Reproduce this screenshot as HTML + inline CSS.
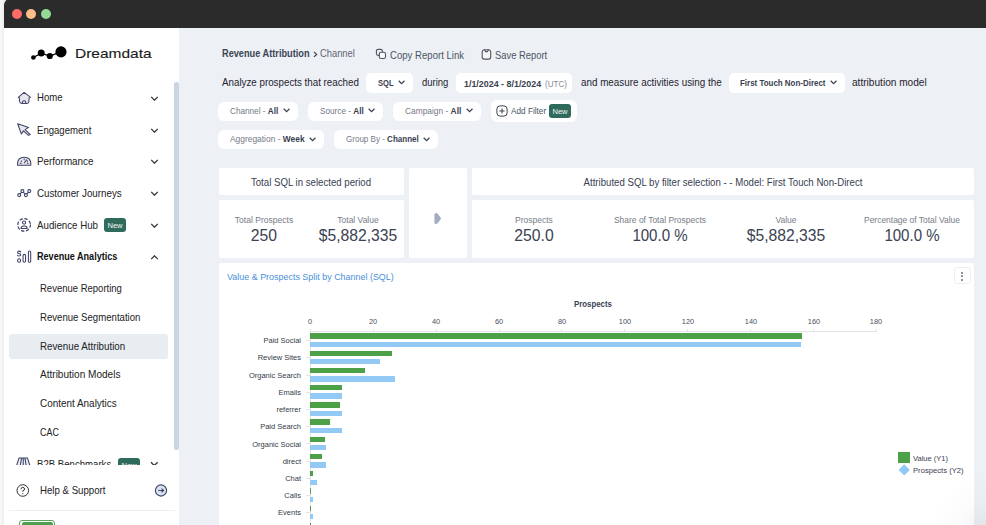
<!DOCTYPE html>
<html><head><meta charset="utf-8"><style>
html,body{margin:0;padding:0;}
body{width:986px;height:525px;overflow:hidden;position:relative;font-family:"Liberation Sans",sans-serif;background:#f3f3f3;}
.r{position:absolute;}
.t{position:absolute;white-space:nowrap;}
b{font-weight:bold;}
</style></head><body>
<div class="r" style="left:0px;top:0px;width:986px;height:525px;background:linear-gradient(to right,#f8f8f8 0,#f1f1f1 3px,#ededed 4px);"></div>
<div class="r" style="left:4px;top:-1px;width:990px;height:530px;background:#ffffff;border-radius:6px 0 0 0;overflow:hidden;"></div>
<div class="r" style="left:179.2px;top:20px;width:820px;height:510px;background:#edf0f5;"></div>
<div class="r" style="left:4px;top:-1px;width:990px;height:28.5px;background:#2b2b2b;border-radius:6px 0 0 0;"></div>
<div class="r" style="left:11.500000000000002px;top:8.6px;width:10.2px;height:10.2px;background:#fe6b68;border-radius:50%;"></div>
<div class="r" style="left:26.1px;top:8.6px;width:10.2px;height:10.2px;background:#fdbd88;border-radius:50%;"></div>
<div class="r" style="left:40.8px;top:8.6px;width:10.2px;height:10.2px;background:#95d895;border-radius:50%;"></div>
<div class="r" style="left:174px;top:82px;width:5px;height:368px;background:#c9d6e2;border-radius:2.5px;"></div>
<svg class="r" style="left:25px;top:40px" width="50" height="25" viewBox="25 40 50 25">
<path d="M33.4 57.5 L41.2 53.1 L49.8 56 L61 51.9" stroke="#000" stroke-width="1.3" fill="none"/>
<circle cx="33.4" cy="57.5" r="2.3"/><circle cx="41.2" cy="53.1" r="3.5"/><circle cx="49.8" cy="56" r="3.1"/><circle cx="61" cy="51.9" r="5.6"/>
</svg>
<div class="t" style="left:74.80px;top:46.80px;font-size:13.4px;line-height:13.4px;color:#1a1a1a;transform:scaleX(1.1570);transform-origin:0 0;-webkit-text-stroke:0.1px #1a1a1a;">Dreamdata</div>
<div class="t" style="left:37.40px;top:93.40px;font-size:10.2px;line-height:10.2px;color:#222222;transform:scaleX(0.9409);transform-origin:0 0;">Home</div>
<svg class="r" style="left:151px;top:96.2px" width="7" height="5" viewBox="-0.2 -0.6 7 4.5"><path d="M0 0 L3.3 3.3 L6.6 0" stroke="#333" stroke-width="1.3" fill="none"/></svg>
<div class="t" style="left:37.40px;top:125.50px;font-size:10.2px;line-height:10.2px;color:#222222;transform:scaleX(0.9404);transform-origin:0 0;">Engagement</div>
<svg class="r" style="left:151px;top:128.3px" width="7" height="5" viewBox="-0.2 -0.6 7 4.5"><path d="M0 0 L3.3 3.3 L6.6 0" stroke="#333" stroke-width="1.3" fill="none"/></svg>
<div class="t" style="left:37.40px;top:156.60px;font-size:10.2px;line-height:10.2px;color:#222222;transform:scaleX(0.9693);transform-origin:0 0;">Performance</div>
<svg class="r" style="left:151px;top:159.4px" width="7" height="5" viewBox="-0.2 -0.6 7 4.5"><path d="M0 0 L3.3 3.3 L6.6 0" stroke="#333" stroke-width="1.3" fill="none"/></svg>
<div class="t" style="left:37.40px;top:188.50px;font-size:10.2px;line-height:10.2px;color:#222222;transform:scaleX(0.9589);transform-origin:0 0;">Customer Journeys</div>
<svg class="r" style="left:151px;top:191.3px" width="7" height="5" viewBox="-0.2 -0.6 7 4.5"><path d="M0 0 L3.3 3.3 L6.6 0" stroke="#333" stroke-width="1.3" fill="none"/></svg>
<div class="t" style="left:37.40px;top:220.50px;font-size:10.2px;line-height:10.2px;color:#222222;transform:scaleX(0.9535);transform-origin:0 0;">Audience Hub</div>
<svg class="r" style="left:151px;top:223.3px" width="7" height="5" viewBox="-0.2 -0.6 7 4.5"><path d="M0 0 L3.3 3.3 L6.6 0" stroke="#333" stroke-width="1.3" fill="none"/></svg>
<div class="t" style="left:37.40px;top:252.00px;font-size:10.1px;line-height:10.1px;color:#111;font-weight:bold;transform:scaleX(0.8989);transform-origin:0 0;">Revenue Analytics</div>
<svg class="r" style="left:151px;top:254.6px" width="7" height="5" viewBox="-0.2 -0.6 7 4.5"><path d="M0 3.3 L3.3 0 L6.6 3.3" stroke="#333" stroke-width="1.3" fill="none"/></svg>
<div class="r" style="left:103.8px;top:218.2px;width:22px;height:14.2px;background:#2f6b5c;border-radius:3px;"></div>
<div class="t" style="left:114.80px;top:222.20px;font-size:7.9px;line-height:7.9px;color:#f2f7f5;transform:translateX(-50%) scaleX(0.9615);transform-origin:50% 0;">New</div>
<svg class="r" style="left:0;top:0" width="180" height="525" viewBox="0 0 180 525" fill="none" stroke="#3d4266" stroke-width="1.05" stroke-linejoin="round" stroke-linecap="round">
<path d="M19.3 97.6 L19.6 101.5 Q19.9 103.4 21.7 103.4 L27 103.4 Q28.7 103.4 28.9 101.5 L29.1 97.6 L24.1 92.6 Z" fill="#e6e7ee" stroke="none"/>
<path d="M18.3 97.4 L24.1 92.4 L30.6 97.4 M19.3 97.6 L19.6 101.5 Q19.9 103.4 21.7 103.4 L27 103.4 Q28.7 103.4 28.9 101.5 L29.1 97.6 M22.4 103.3 L22.4 102.5 Q22.4 100.8 24.1 100.8 Q25.8 100.8 25.8 102.5 L25.8 103.3"/>
<path d="M17.7 123.8 L28.6 127.4 L25.1 129.6 L30.3 134.6 L28.4 135.3 L23.6 130.9 L21.3 133.9 Z" fill="#e6e7ee"/>
<path d="M17.6 165.2 L17.6 163.8 Q17.6 157.2 24.2 157.2 Q30.8 157.2 30.8 163.8 L30.8 165.2 Z" fill="#e6e7ee"/>
<path d="M20.2 163.3 L21.2 163.3 M27.2 163.3 L28.2 163.3 M21.3 160.8 L21.3 161.6 M27.3 160.7 L27.3 161.5 M24.2 159 L24.2 159.8 M24.4 162.8 L26.6 159.8"/>
<path d="M19.2 195 L22.4 191.2 L25.9 195 L29.3 191.2"/>
<circle cx="19.2" cy="195.1" r="1.5" fill="#fff"/><circle cx="22.4" cy="191.1" r="1.5" fill="#fff"/><circle cx="25.9" cy="195.1" r="1.5" fill="#fff"/><circle cx="29.3" cy="191.1" r="1.5" fill="#fff"/>
<circle cx="24.1" cy="224.9" r="6.3" stroke-dasharray="2.4 2.55" stroke-width="1.2"/>
<circle cx="24.1" cy="222.6" r="1.6"/>
<path d="M21 228.4 Q21 225.9 24.1 225.9 Q27.2 225.9 27.2 228.4 Z"/>
<path d="M20.7 251.9 Q20.1 251.1 19.1 251.1 Q17.6 251.1 17.6 252.4 Q17.6 253.4 19.1 253.5 Q20.7 253.6 20.7 254.8 Q20.7 256 19.1 256 Q18 256 17.5 255.2" stroke-width="1.05"/>
<ellipse cx="19.1" cy="260.55" rx="1.55" ry="1.75"/>
<rect x="23.05" y="254.35" width="2.5" height="7.95" rx="1.25"/>
<rect x="28.4" y="250.95" width="2.3" height="11.35" rx="1.15"/>
</svg>
<div class="r" style="left:8.8px;top:333.5px;width:159.2px;height:25.3px;background:#e8edf2;border-radius:3px;"></div>
<div class="t" style="left:40.00px;top:283.50px;font-size:10.2px;line-height:10.2px;color:#222222;transform:scaleX(0.9330);transform-origin:0 0;">Revenue Reporting</div>
<div class="t" style="left:40.00px;top:312.60px;font-size:10.2px;line-height:10.2px;color:#222222;transform:scaleX(0.9427);transform-origin:0 0;">Revenue Segmentation</div>
<div class="t" style="left:40.00px;top:341.50px;font-size:10.2px;line-height:10.2px;color:#222222;transform:scaleX(0.9581);transform-origin:0 0;">Revenue Attribution</div>
<div class="t" style="left:40.00px;top:370.30px;font-size:10.2px;line-height:10.2px;color:#222222;transform:scaleX(0.9860);transform-origin:0 0;">Attribution Models</div>
<div class="t" style="left:40.00px;top:399.10px;font-size:10.2px;line-height:10.2px;color:#222222;transform:scaleX(0.9745);transform-origin:0 0;">Content Analytics</div>
<div class="t" style="left:40.00px;top:428.10px;font-size:10.2px;line-height:10.2px;color:#222222;transform:scaleX(0.8776);transform-origin:0 0;">CAC</div>
<div class="r" style="left:4px;top:440px;width:170px;height:24.8px;overflow:hidden">
<div style="position:absolute;left:0;top:0;width:170px;height:40px">
<div class="t" style="left:33.40px;top:20.20px;font-size:10.2px;line-height:10.2px;color:#222222;transform:scaleX(0.9428);transform-origin:0 0;">B2B Benchmarks</div>
<div class="r" style="left:113.5px;top:17.9px;width:22.4px;height:14.2px;background:#2f6b5c;border-radius:3px;"></div>
<div class="t" style="left:124.70px;top:21.90px;font-size:7.9px;line-height:7.9px;color:#f2f7f5;transform:translateX(-50%) scaleX(0.9615);transform-origin:50% 0;">New</div>
<svg class="r" style="left:0;top:0" width="170" height="40" viewBox="4 440 170 40" fill="none" stroke-linejoin="round"><path d="M16.6 465.5 L19.1 457.9 L27.4 457.9 L29.9 465.5 Z" fill="#eceef4" stroke="none"/><path d="M16.6 465.5 L19.1 457.9 L27.4 457.9 L29.9 465.5 M20.3 465.5 L21.6 457.9 M24.9 457.9 L26.2 465.5 M23.25 457.9 L23.25 465.5" stroke="#3d4266" stroke-width="1.05"/><path d="M151 462.3 L154.3 465.6 L157.6 462.3" stroke="#333" stroke-width="1.3"/></svg>
</div></div>
<div class="t" style="left:39.90px;top:486.10px;font-size:10.2px;line-height:10.2px;color:#222222;transform:scaleX(0.9469);transform-origin:0 0;">Help &amp; Support</div>
<svg class="r" style="left:16px;top:484px" width="14" height="13" viewBox="0 0 14 13"><circle cx="6.8" cy="6.5" r="5.8" stroke="#333" stroke-width="1" fill="none"/><path d="M5 5.2 Q5 3.4 6.8 3.4 Q8.6 3.4 8.6 5 Q8.6 6.2 6.8 6.8 L6.8 7.8" stroke="#333" stroke-width="1" fill="none"/><circle cx="6.8" cy="9.6" r="0.6" fill="#333"/></svg>
<svg class="r" style="left:154px;top:484px" width="14" height="13" viewBox="0 0 14 13"><circle cx="7" cy="6.5" r="5.6" stroke="#3d4266" stroke-width="1.1" fill="#d8e2ee"/><path d="M4.3 6.5 L9.6 6.5 M7.6 4.6 L9.6 6.5 L7.6 8.4" stroke="#3d4266" stroke-width="1.1" fill="none"/></svg>
<div class="r" style="left:9px;top:510px;width:166px;height:1px;background:#eceff3;"></div>
<div class="r" style="left:19.2px;top:520px;width:35.7px;height:10px;background:#ffffff;border:1px solid #57a55a;border-radius:3px;box-sizing:border-box;"></div>
<div class="r" style="left:21.5px;top:522px;width:31px;height:10px;background:#4e9f4d;border-radius:2px;"></div>
<div class="t" style="left:222.20px;top:49.20px;font-size:10.1px;line-height:10.1px;color:#3c4456;font-weight:bold;transform:scaleX(0.9112);transform-origin:0 0;">Revenue Attribution</div>
<svg class="r" style="left:312.6px;top:50.8px" width="5" height="7" viewBox="0 0 5 7"><path d="M1 0.9 L3.6 3.4 L1 5.9" stroke="#3c4456" stroke-width="1.3" fill="none"/></svg>
<div class="t" style="left:320.30px;top:49.20px;font-size:10.2px;line-height:10.2px;color:#5f6673;transform:scaleX(0.9185);transform-origin:0 0;">Channel</div>
<svg class="r" style="left:370px;top:44px" width="20" height="20" viewBox="370 44 20 20" fill="none" stroke="#4f5560" stroke-width="1.1"><rect x="376.4" y="49.4" width="6" height="6" rx="1.8"/><rect x="379.3" y="52.3" width="6.2" height="6.2" rx="1.8" fill="#f7f8fa"/></svg>
<div class="t" style="left:389.70px;top:50.70px;font-size:10.3px;line-height:10.3px;color:#4b5563;transform:scaleX(0.9311);transform-origin:0 0;">Copy Report Link</div>
<svg class="r" style="left:476px;top:44px" width="20" height="20" viewBox="476 44 20 20" fill="none" stroke="#4f5560" stroke-width="1.1"><path d="M484.2 49.7 L488.8 49.7 Q490.7 49.9 490.7 52 L490.7 57.1 Q490.7 59.1 488.7 59.1 L484.2 59.1 Q482.2 59.1 482.2 57.1 L482.2 52 Q482.2 49.9 484.2 49.7 Z" fill="#f4f5f8"/><path d="M484.4 49.8 L485.6 51.6 L487.4 51.6 L488.6 49.8"/></svg>
<div class="t" style="left:495.40px;top:50.70px;font-size:10.3px;line-height:10.3px;color:#4b5563;transform:scaleX(0.9117);transform-origin:0 0;">Save Report</div>
<div class="t" style="left:222.20px;top:78.20px;font-size:10.2px;line-height:10.2px;color:#1f2430;transform:scaleX(0.9595);transform-origin:0 0;">Analyze prospects that reached</div>
<div class="r" style="left:366px;top:73px;width:46.9px;height:19.5px;background:#fff;border-radius:5px;"></div>
<div class="t" style="left:377.50px;top:79.10px;font-size:8.9px;line-height:8.9px;color:#3a4150;font-weight:bold;transform:scaleX(0.8500);transform-origin:0 0;">SQL</div>
<svg class="r" style="left:397.9px;top:80.39999999999999px" width="7.5" height="5" viewBox="0 0 7.5 5"><path d="M0.7 0.8 L3.6 3.6 L6.5 0.8" stroke="#3a4150" stroke-width="1.25" fill="none"/></svg>
<div class="t" style="left:422.40px;top:78.20px;font-size:10.2px;line-height:10.2px;color:#1f2430;transform:scaleX(0.9310);transform-origin:0 0;">during</div>
<div class="r" style="left:456.1px;top:73px;width:115.7px;height:19.8px;background:#fff;border-radius:5px;"></div>
<div class="t" style="left:463.80px;top:79.80px;font-size:9.26px;line-height:9.26px;color:#3a4150;font-weight:bold;transform:scaleX(0.9615);transform-origin:0 0;">1/1/2024 - 8/1/2024</div>
<div class="t" style="left:544.60px;top:79.80px;font-size:8.42px;line-height:8.42px;color:#858b96;transform:scaleX(0.9615);transform-origin:0 0;">(UTC)</div>
<div class="t" style="left:581.20px;top:78.20px;font-size:10.2px;line-height:10.2px;color:#1f2430;transform:scaleX(0.9663);transform-origin:0 0;">and measure activities using the</div>
<div class="r" style="left:728.9px;top:73.3px;width:116.1px;height:19.6px;background:#fff;border-radius:5px;"></div>
<div class="t" style="left:740.00px;top:79.20px;font-size:8.9px;line-height:8.9px;color:#3a4150;font-weight:bold;transform:scaleX(0.8950);transform-origin:0 0;">First Touch Non-Direct</div>
<svg class="r" style="left:830.4px;top:80.39999999999999px" width="7.5" height="5" viewBox="0 0 7.5 5"><path d="M0.7 0.8 L3.6 3.6 L6.5 0.8" stroke="#3a4150" stroke-width="1.25" fill="none"/></svg>
<div class="t" style="left:851.70px;top:78.30px;font-size:10.2px;line-height:10.2px;color:#1f2430;transform:scaleX(0.9919);transform-origin:0 0;">attribution model</div>
<div class="r" style="left:218.1px;top:101.5px;width:79.7px;height:19.5px;background:#fff;border-radius:6px;"></div>
<div class="t" style="left:229.7px;top:106.80px;font-size:8.53px;line-height:8.53px;color:#747a86;transform:scaleX(0.9611);transform-origin:0 0">Channel - <b style="color:#394050">All</b></div>
<svg class="r" style="left:283.2px;top:108.3px" width="7.5" height="5" viewBox="0 0 7.5 5"><path d="M0.7 0.8 L3.6 3.6 L6.5 0.8" stroke="#3a4150" stroke-width="1.25" fill="none"/></svg>
<div class="r" style="left:308px;top:101.5px;width:75px;height:19.5px;background:#fff;border-radius:6px;"></div>
<div class="t" style="left:319.5px;top:106.80px;font-size:8.53px;line-height:8.53px;color:#747a86;transform:scaleX(0.9647);transform-origin:0 0">Source - <b style="color:#394050">All</b></div>
<svg class="r" style="left:368.4px;top:108.3px" width="7.5" height="5" viewBox="0 0 7.5 5"><path d="M0.7 0.8 L3.6 3.6 L6.5 0.8" stroke="#3a4150" stroke-width="1.25" fill="none"/></svg>
<div class="r" style="left:393.2px;top:101.5px;width:87.6px;height:19.5px;background:#fff;border-radius:6px;"></div>
<div class="t" style="left:404.6px;top:106.80px;font-size:8.53px;line-height:8.53px;color:#747a86;transform:scaleX(0.9832);transform-origin:0 0">Campaign - <b style="color:#394050">All</b></div>
<svg class="r" style="left:465.79999999999995px;top:108.3px" width="7.5" height="5" viewBox="0 0 7.5 5"><path d="M0.7 0.8 L3.6 3.6 L6.5 0.8" stroke="#3a4150" stroke-width="1.25" fill="none"/></svg>
<div class="r" style="left:491px;top:100px;width:85.8px;height:22px;background:#fff;border-radius:6px;"></div>
<svg class="r" style="left:496px;top:105px" width="12" height="12" viewBox="0 0 12 12"><rect x="0.9" y="0.9" width="10.2" height="10.2" rx="3.2" stroke="#3a4150" stroke-width="1" fill="none"/><path d="M6 3.4 L6 8.6 M3.4 6 L8.6 6" stroke="#3a4150" stroke-width="1" fill="none"/></svg>
<div class="t" style="left:510.80px;top:106.90px;font-size:9.2px;line-height:9.2px;color:#4b5563;transform:scaleX(0.8941);transform-origin:0 0;">Add Filter</div>
<div class="r" style="left:549.4px;top:104px;width:21.6px;height:14px;background:#2f6b5c;border-radius:3px;"></div>
<div class="t" style="left:560.20px;top:108.00px;font-size:7.9px;line-height:7.9px;color:#f2f7f5;transform:translateX(-50%) scaleX(0.9615);transform-origin:50% 0;">New</div>
<div class="r" style="left:218.1px;top:129.5px;width:105.9px;height:19.7px;background:#fff;border-radius:6px;"></div>
<div class="t" style="left:229.7px;top:134.80px;font-size:8.53px;line-height:8.53px;color:#747a86;transform:scaleX(0.9866);transform-origin:0 0">Aggregation - <b style="color:#394050">Week</b></div>
<svg class="r" style="left:308.79999999999995px;top:136.60000000000002px" width="7.5" height="5" viewBox="0 0 7.5 5"><path d="M0.7 0.8 L3.6 3.6 L6.5 0.8" stroke="#3a4150" stroke-width="1.25" fill="none"/></svg>
<div class="r" style="left:334.1px;top:129.5px;width:103.7px;height:19.7px;background:#fff;border-radius:6px;"></div>
<div class="t" style="left:345.6px;top:134.80px;font-size:8.53px;line-height:8.53px;color:#747a86;transform:scaleX(0.9435);transform-origin:0 0">Group By - <b style="color:#394050">Channel</b></div>
<svg class="r" style="left:423.2px;top:136.60000000000002px" width="7.5" height="5" viewBox="0 0 7.5 5"><path d="M0.7 0.8 L3.6 3.6 L6.5 0.8" stroke="#3a4150" stroke-width="1.25" fill="none"/></svg>
<div class="r" style="left:218.7px;top:168.1px;width:185.4px;height:26.8px;background:#fff;border-radius:2px;"></div>
<div class="t" style="left:311.40px;top:178.00px;font-size:10.02px;line-height:10.02px;color:#374151;transform:translateX(-50%) scaleX(0.9615);transform-origin:50% 0;">Total SQL in selected period</div>
<div class="r" style="left:218.7px;top:200px;width:185.4px;height:58.2px;background:#fff;border-radius:2px;"></div>
<div class="t" style="left:264.30px;top:216.30px;font-size:8.91px;line-height:8.91px;color:#777d88;transform:translateX(-50%) scaleX(0.9615);transform-origin:50% 0;">Total Prospects</div>
<div class="t" style="left:264.30px;top:227.10px;font-size:16.39px;line-height:16.39px;color:#3b4252;transform:translateX(-50%) scaleX(0.9615);transform-origin:50% 0;-webkit-text-stroke:0;">250</div>
<div class="t" style="left:358.10px;top:216.30px;font-size:8.84px;line-height:8.84px;color:#777d88;transform:translateX(-50%) scaleX(0.9615);transform-origin:50% 0;">Total Value</div>
<div class="t" style="left:358.30px;top:227.10px;font-size:16.34px;line-height:16.34px;color:#3b4252;transform:translateX(-50%) scaleX(0.9615);transform-origin:50% 0;-webkit-text-stroke:0;">$5,882,335</div>
<div class="r" style="left:408.7px;top:168.1px;width:58.6px;height:90.1px;background:#fff;border-radius:2px;"></div>
<svg class="r" style="left:428px;top:208px" width="20" height="22" viewBox="428 208 20 22"><path d="M434.4 214.6 Q434.4 213 436.3 213.1 Q437.3 213.2 437.9 213.9 L440.6 217.6 Q441.3 218.5 440.6 219.4 L437.9 223.1 Q437.3 223.9 436.3 223.9 Q434.4 224 434.4 222.4 Z" fill="#a3afbe"/></svg>
<div class="r" style="left:472px;top:168.1px;width:501.8px;height:26.8px;background:#fff;border-radius:2px;"></div>
<div class="t" style="left:722.90px;top:178.00px;font-size:10.02px;line-height:10.02px;color:#374151;transform:translateX(-50%) scaleX(0.9615);transform-origin:50% 0;">Attributed SQL by filter selection - - Model: First Touch Non-Direct</div>
<div class="r" style="left:472px;top:200px;width:501.8px;height:58.2px;background:#fff;border-radius:2px;"></div>
<div class="t" style="left:534.00px;top:216.30px;font-size:8.84px;line-height:8.84px;color:#777d88;transform:translateX(-50%) scaleX(0.9615);transform-origin:50% 0;">Prospects</div>
<div class="t" style="left:534.00px;top:227.10px;font-size:16.39px;line-height:16.39px;color:#3b4252;transform:translateX(-50%) scaleX(0.9615);transform-origin:50% 0;-webkit-text-stroke:0;">250.0</div>
<div class="t" style="left:660.00px;top:216.30px;font-size:8.82px;line-height:8.82px;color:#777d88;transform:translateX(-50%) scaleX(0.9615);transform-origin:50% 0;">Share of Total Prospects</div>
<div class="t" style="left:660.00px;top:228.10px;font-size:15.67px;line-height:15.67px;color:#3b4252;transform:translateX(-50%) scaleX(0.9615);transform-origin:50% 0;-webkit-text-stroke:0;">100.0 %</div>
<div class="t" style="left:786.20px;top:216.30px;font-size:8.84px;line-height:8.84px;color:#777d88;transform:translateX(-50%) scaleX(0.9615);transform-origin:50% 0;">Value</div>
<div class="t" style="left:786.20px;top:227.10px;font-size:16.34px;line-height:16.34px;color:#3b4252;transform:translateX(-50%) scaleX(0.9615);transform-origin:50% 0;-webkit-text-stroke:0;">$5,882,335</div>
<div class="t" style="left:912.30px;top:216.30px;font-size:8.79px;line-height:8.79px;color:#777d88;transform:translateX(-50%) scaleX(0.9615);transform-origin:50% 0;">Percentage of Total Value</div>
<div class="t" style="left:912.30px;top:228.10px;font-size:15.67px;line-height:15.67px;color:#3b4252;transform:translateX(-50%) scaleX(0.9615);transform-origin:50% 0;-webkit-text-stroke:0;">100.0 %</div>
<div class="r" style="left:218.7px;top:263.4px;width:755.5px;height:300px;background:#fff;border-radius:2px;"></div>
<div class="t" style="left:226.80px;top:272.70px;font-size:9.3px;line-height:9.3px;color:#4a90d9;transform:scaleX(0.9615);transform-origin:0 0;">Value &amp; Prospects Split by Channel (SQL)</div>
<div class="r" style="left:953.6px;top:266.6px;width:17.6px;height:17.6px;background:#fff;border:1px solid #efefef;border-radius:3px;box-sizing:border-box;"></div>
<div class="r" style="left:961.3px;top:271.5px;width:2.2px;height:2.2px;background:#6a6f7a;border-radius:50%;"></div>
<div class="r" style="left:961.3px;top:275.0px;width:2.2px;height:2.2px;background:#6a6f7a;border-radius:50%;"></div>
<div class="r" style="left:961.3px;top:278.5px;width:2.2px;height:2.2px;background:#6a6f7a;border-radius:50%;"></div>
<div class="t" style="left:592.80px;top:301.00px;font-size:8.17px;line-height:8.17px;color:#3b4252;font-weight:bold;transform:translateX(-50%) scaleX(0.9615);transform-origin:50% 0;">Prospects</div>
<div class="r" style="left:310.3px;top:331.2px;width:566.6999999999999px;height:1px;background:#e3e3e3;"></div>
<div class="r" style="left:309.8px;top:328.8px;width:1px;height:3px;background:#e3e3e3;"></div>
<div class="t" style="left:310.30px;top:318.00px;font-size:7.7px;line-height:7.7px;color:#4b5060;transform:translateX(-50%) scaleX(0.9615);transform-origin:50% 0;">0</div>
<div class="r" style="left:372.71000000000004px;top:328.8px;width:1px;height:3px;background:#e3e3e3;"></div>
<div class="t" style="left:373.21px;top:318.00px;font-size:7.7px;line-height:7.7px;color:#4b5060;transform:translateX(-50%) scaleX(0.9615);transform-origin:50% 0;">20</div>
<div class="r" style="left:435.62px;top:328.8px;width:1px;height:3px;background:#e3e3e3;"></div>
<div class="t" style="left:436.12px;top:318.00px;font-size:7.7px;line-height:7.7px;color:#4b5060;transform:translateX(-50%) scaleX(0.9615);transform-origin:50% 0;">40</div>
<div class="r" style="left:498.53000000000003px;top:328.8px;width:1px;height:3px;background:#e3e3e3;"></div>
<div class="t" style="left:499.03px;top:318.00px;font-size:7.7px;line-height:7.7px;color:#4b5060;transform:translateX(-50%) scaleX(0.9615);transform-origin:50% 0;">60</div>
<div class="r" style="left:561.44px;top:328.8px;width:1px;height:3px;background:#e3e3e3;"></div>
<div class="t" style="left:561.94px;top:318.00px;font-size:7.7px;line-height:7.7px;color:#4b5060;transform:translateX(-50%) scaleX(0.9615);transform-origin:50% 0;">80</div>
<div class="r" style="left:624.35px;top:328.8px;width:1px;height:3px;background:#e3e3e3;"></div>
<div class="t" style="left:624.85px;top:318.00px;font-size:7.7px;line-height:7.7px;color:#4b5060;transform:translateX(-50%) scaleX(0.9615);transform-origin:50% 0;">100</div>
<div class="r" style="left:687.26px;top:328.8px;width:1px;height:3px;background:#e3e3e3;"></div>
<div class="t" style="left:687.76px;top:318.00px;font-size:7.7px;line-height:7.7px;color:#4b5060;transform:translateX(-50%) scaleX(0.9615);transform-origin:50% 0;">120</div>
<div class="r" style="left:750.1700000000001px;top:328.8px;width:1px;height:3px;background:#e3e3e3;"></div>
<div class="t" style="left:750.67px;top:318.00px;font-size:7.7px;line-height:7.7px;color:#4b5060;transform:translateX(-50%) scaleX(0.9615);transform-origin:50% 0;">140</div>
<div class="r" style="left:813.08px;top:328.8px;width:1px;height:3px;background:#e3e3e3;"></div>
<div class="t" style="left:813.58px;top:318.00px;font-size:7.7px;line-height:7.7px;color:#4b5060;transform:translateX(-50%) scaleX(0.9615);transform-origin:50% 0;">160</div>
<div class="r" style="left:875.99px;top:328.8px;width:1px;height:3px;background:#e3e3e3;"></div>
<div class="t" style="left:876.49px;top:318.00px;font-size:7.7px;line-height:7.7px;color:#4b5060;transform:translateX(-50%) scaleX(0.9615);transform-origin:50% 0;">180</div>
<div class="r" style="left:309.8px;top:328.8px;width:1px;height:200px;background:#e3e3e3;"></div>
<div class="r" style="left:310.3px;top:333.3px;width:491.6px;height:5.4px;background:#4ca046;"></div>
<div class="r" style="left:310.3px;top:341.8px;width:490.6px;height:5.3px;background:#93caf5;"></div>
<div class="r" style="left:306px;top:340.1px;width:4px;height:1px;background:#e3e3e3;"></div>
<div class="t" style="left:301.10px;top:337.20px;font-size:7.8px;line-height:7.8px;color:#333a48;transform:translateX(-100%) scaleX(0.9615);transform-origin:100% 0;">Paid Social</div>
<div class="r" style="left:310.3px;top:350.52px;width:82.1px;height:5.4px;background:#4ca046;"></div>
<div class="r" style="left:310.3px;top:359.02px;width:69.5px;height:5.3px;background:#93caf5;"></div>
<div class="r" style="left:306px;top:357.32px;width:4px;height:1px;background:#e3e3e3;"></div>
<div class="t" style="left:301.10px;top:354.42px;font-size:7.8px;line-height:7.8px;color:#333a48;transform:translateX(-100%) scaleX(0.9615);transform-origin:100% 0;">Review Sites</div>
<div class="r" style="left:310.3px;top:367.74px;width:54.7px;height:5.4px;background:#4ca046;"></div>
<div class="r" style="left:310.3px;top:376.24px;width:84.7px;height:5.3px;background:#93caf5;"></div>
<div class="r" style="left:306px;top:374.54px;width:4px;height:1px;background:#e3e3e3;"></div>
<div class="t" style="left:301.10px;top:371.64px;font-size:7.8px;line-height:7.8px;color:#333a48;transform:translateX(-100%) scaleX(0.9615);transform-origin:100% 0;">Organic Search</div>
<div class="r" style="left:310.3px;top:384.96000000000004px;width:31.4px;height:5.4px;background:#4ca046;"></div>
<div class="r" style="left:310.3px;top:393.46000000000004px;width:31.8px;height:5.3px;background:#93caf5;"></div>
<div class="r" style="left:306px;top:391.76000000000005px;width:4px;height:1px;background:#e3e3e3;"></div>
<div class="t" style="left:301.10px;top:388.86px;font-size:7.8px;line-height:7.8px;color:#333a48;transform:translateX(-100%) scaleX(0.9615);transform-origin:100% 0;">Emails</div>
<div class="r" style="left:310.3px;top:402.18px;width:29.8px;height:5.4px;background:#4ca046;"></div>
<div class="r" style="left:310.3px;top:410.68px;width:31.8px;height:5.3px;background:#93caf5;"></div>
<div class="r" style="left:306px;top:408.98px;width:4px;height:1px;background:#e3e3e3;"></div>
<div class="t" style="left:301.10px;top:406.08px;font-size:7.8px;line-height:7.8px;color:#333a48;transform:translateX(-100%) scaleX(0.9615);transform-origin:100% 0;">referrer</div>
<div class="r" style="left:310.3px;top:419.4px;width:19.8px;height:5.4px;background:#4ca046;"></div>
<div class="r" style="left:310.3px;top:427.9px;width:32px;height:5.3px;background:#93caf5;"></div>
<div class="r" style="left:306px;top:426.2px;width:4px;height:1px;background:#e3e3e3;"></div>
<div class="t" style="left:301.10px;top:423.30px;font-size:7.8px;line-height:7.8px;color:#333a48;transform:translateX(-100%) scaleX(0.9615);transform-origin:100% 0;">Paid Search</div>
<div class="r" style="left:310.3px;top:436.62px;width:15.2px;height:5.4px;background:#4ca046;"></div>
<div class="r" style="left:310.3px;top:445.12px;width:15.6px;height:5.3px;background:#93caf5;"></div>
<div class="r" style="left:306px;top:443.42px;width:4px;height:1px;background:#e3e3e3;"></div>
<div class="t" style="left:301.10px;top:440.52px;font-size:7.8px;line-height:7.8px;color:#333a48;transform:translateX(-100%) scaleX(0.9615);transform-origin:100% 0;">Organic Social</div>
<div class="r" style="left:310.3px;top:453.84000000000003px;width:11.5px;height:5.4px;background:#4ca046;"></div>
<div class="r" style="left:310.3px;top:462.34000000000003px;width:15.6px;height:5.3px;background:#93caf5;"></div>
<div class="r" style="left:306px;top:460.64000000000004px;width:4px;height:1px;background:#e3e3e3;"></div>
<div class="t" style="left:301.10px;top:457.74px;font-size:7.8px;line-height:7.8px;color:#333a48;transform:translateX(-100%) scaleX(0.9615);transform-origin:100% 0;">direct</div>
<div class="r" style="left:310.3px;top:471.06px;width:2.6px;height:5.4px;background:#4ca046;"></div>
<div class="r" style="left:310.3px;top:479.56px;width:6.7px;height:5.3px;background:#93caf5;"></div>
<div class="r" style="left:306px;top:477.86px;width:4px;height:1px;background:#e3e3e3;"></div>
<div class="t" style="left:301.10px;top:474.96px;font-size:7.8px;line-height:7.8px;color:#333a48;transform:translateX(-100%) scaleX(0.9615);transform-origin:100% 0;">Chat</div>
<div class="r" style="left:310.3px;top:488.28px;width:1px;height:5.4px;background:#4ca046;"></div>
<div class="r" style="left:310.3px;top:496.78px;width:3px;height:5.3px;background:#93caf5;"></div>
<div class="r" style="left:306px;top:495.08px;width:4px;height:1px;background:#e3e3e3;"></div>
<div class="t" style="left:301.10px;top:492.18px;font-size:7.8px;line-height:7.8px;color:#333a48;transform:translateX(-100%) scaleX(0.9615);transform-origin:100% 0;">Calls</div>
<div class="r" style="left:310.3px;top:505.5px;width:1px;height:5.4px;background:#4ca046;"></div>
<div class="r" style="left:310.3px;top:514.0px;width:3px;height:5.3px;background:#93caf5;"></div>
<div class="r" style="left:306px;top:512.3px;width:4px;height:1px;background:#e3e3e3;"></div>
<div class="t" style="left:301.10px;top:509.40px;font-size:7.8px;line-height:7.8px;color:#333a48;transform:translateX(-100%) scaleX(0.9615);transform-origin:100% 0;">Events</div>
<div class="r" style="left:310.3px;top:522.72px;width:1px;height:5.4px;background:#4ca046;"></div>
<div class="r" style="left:310.3px;top:531.22px;width:3px;height:5.3px;background:#93caf5;"></div>
<div class="r" style="left:880px;top:440px;width:120px;height:100px;background:radial-gradient(circle at 106px 88px, rgba(0,0,0,0.05) 0, rgba(0,0,0,0.015) 25px, rgba(0,0,0,0) 55px);"></div>
<div class="r" style="left:897.8px;top:451.7px;width:11.8px;height:11.8px;background:#4ca046;"></div>
<div class="r" style="left:899.5px;top:465.8px;width:8.4px;height:8.4px;background:#93caf5;transform:rotate(45deg);"></div>
<div class="t" style="left:912.80px;top:454.50px;font-size:7.85px;line-height:7.85px;color:#3b4252;transform:scaleX(0.9615);transform-origin:0 0;">Value (Y1)</div>
<div class="t" style="left:912.80px;top:466.60px;font-size:7.96px;line-height:7.96px;color:#3b4252;transform:scaleX(0.9615);transform-origin:0 0;">Prospects (Y2)</div>
</body></html>
